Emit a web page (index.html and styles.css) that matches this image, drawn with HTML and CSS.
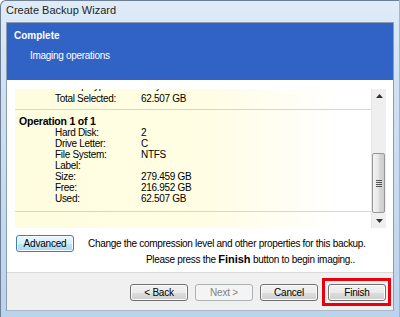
FILE: index.html
```html
<!DOCTYPE html>
<html lang="en">
  <head>
    <meta charset="UTF-8" />
    <title>Create Backup Wizard</title>
    <link rel="stylesheet" href="styles.css">
  </head>
  <body>
    <div class="window">
      <div class="titlebar">Create Backup Wizard</div>
      <div class="client">
        <div class="banner">
          <h2>Complete</h2>
          <p>Imaging operations</p>
        </div>
        <div class="main">
          <div class="listbox">
            <div class="list-content">
              <div class="section summary">
                <div class="row cut"><span class="key">Backup Type:</span><span>Fully</span></div>
                <div class="row"><span class="key">Total Selected:</span><span>62.507 GB</span></div>
              </div>
              <div class="section">
                <div class="op-title">Operation 1 of 1</div>
                <div class="row"><span class="key">Hard Disk:</span><span>2</span></div>
                <div class="row"><span class="key">Drive Letter:</span><span>C</span></div>
                <div class="row"><span class="key">File System:</span><span>NTFS</span></div>
                <div class="row"><span class="key">Label:</span><span></span></div>
                <div class="row"><span class="key">Size:</span><span>279.459 GB</span></div>
                <div class="row"><span class="key">Free:</span><span>216.952 GB</span></div>
                <div class="row"><span class="key">Used:</span><span>62.507 GB</span></div>
              </div>
            </div>
            <div class="scrollbar">
              <div class="arrow up">
                <svg width="7" height="4" viewBox="0 0 7 4"><path d="M3.5 0 L7 4 L0 4 Z" fill="#333"/></svg>
              </div>
              <div class="track">
                <div class="thumb">
                  <span class="grip"></span>
                </div>
              </div>
              <div class="arrow down">
                <svg width="7" height="4" viewBox="0 0 7 4"><path d="M0 0 L7 0 L3.5 4 Z" fill="#333"/></svg>
              </div>
            </div>
          </div>
          <div class="advanced-row">
            <button class="btn btn-focus">Advanced</button>
            <span>Change the compression level and other properties for this backup.</span>
          </div>
          <p class="hint">Please press the <b>Finish</b> button to begin imaging..</p>
        </div>
        <div class="footer">
          <button class="btn">&lt; Back</button>
          <button class="btn" disabled>Next &gt;</button>
          <button class="btn">Cancel</button>
          <button class="btn finish">Finish</button>
        </div>
      </div>
    </div>
  </body>
</html>
```

FILE: styles.css
```css
html, body {
  margin: 0;
  padding: 0;
}

body {
  width: 400px;
  height: 317px;
  overflow: hidden;
  font-family: "Liberation Sans", Arial, sans-serif;
  font-size: 10px;
  letter-spacing: -0.3px;
  color: #000;
  white-space: nowrap;
}

.window {
  width: 400px;
  height: 317px;
  box-sizing: border-box;
  background: linear-gradient(to bottom, #dfebf8 0%, #cfe0f3 30%, #bcd3ec 100%);
  border-top-left-radius: 6px;
  border-left: 1px solid #6c7f95;
  border-top: 1px solid #6c7f95;
  border-right: 1px solid #78c6e6;
  display: flex;
  flex-direction: column;
}

.titlebar {
  height: 21px;
  flex: none;
  padding: 3px 0 0 5px;
  box-sizing: border-box;
  font-size: 11px;
  letter-spacing: 0;
  color: #1e1e1e;
}

.client {
  margin: 0 5px;
  height: 289px;
  flex: none;
  box-sizing: border-box;
  border: 1px solid #8c9db2;
  border-bottom-color: #aab8c8;
  background: #fff;
  display: flex;
  flex-direction: column;
}

.banner {
  height: 57px;
  flex: none;
  box-sizing: border-box;
  background: #3163c6;
  color: #fff;
  padding: 6px 0 0 7px;
}

.banner h2 {
  margin: 0;
  font-size: 10px;
  font-weight: bold;
  line-height: 13px;
  letter-spacing: 0;
}

.banner p {
  margin: 7px 0 0 16px;
  line-height: 13px;
}

.main {
  flex: none;
  padding: 9px 7px 0 8px;
}

.listbox {
  height: 139px;
  display: flex;
  background: linear-gradient(to right, #fffde0 0%, #fffde3 50%, #ffffff 88%);
}

.list-content {
  flex: 1;
  overflow: hidden;
}

.section {
  border-bottom: 1px solid #d6d6d0;
}

.summary {
  padding: 4px 0 5px;
}

.section + .section {
  padding: 6px 0 7px 4px;
}

.row {
  display: flex;
  line-height: 11px;
  height: 11px;
  padding-left: 40px;
}

.section + .section .row {
  padding-left: 36px;
}

.row.cut {
  margin: -13px 0 2px;
}

.key {
  width: 86px;
  flex: none;
}

.op-title {
  font-weight: bold;
  line-height: 11px;
  font-size: 10.5px;
  letter-spacing: -0.2px;
}

.scrollbar {
  width: 14px;
  flex: none;
  display: flex;
  flex-direction: column;
  background: #efefef;
  border-left: 1px solid #e6e6e6;
}

.arrow {
  height: 14px;
  display: flex;
  align-items: center;
  justify-content: center;
  flex: none;
}

.track {
  flex: 1;
  display: flex;
  flex-direction: column;
  justify-content: flex-end;
}

.thumb {
  height: 60px;
  margin: 0 1px 1px 0;
  box-sizing: border-box;
  border: 1px solid #979797;
  border-radius: 2px;
  background: linear-gradient(to right, #f3f3f3 0%, #e6e6e6 50%, #d9d9d9 51%, #cdcdcd 100%);
  display: flex;
  align-items: center;
  justify-content: center;
}

.grip {
  width: 6px;
  height: 7px;
  background: repeating-linear-gradient(to bottom, #555 0, #555 1px, transparent 1px, transparent 2px);
}

.advanced-row {
  display: flex;
  align-items: center;
  margin-top: 7px;
  gap: 14px;
  padding-left: 1px;
}

.btn {
  font-family: inherit;
  font-size: 10px;
  letter-spacing: -0.2px;
  width: 58px;
  height: 17px;
  padding: 0;
  box-sizing: border-box;
  border: 1px solid #707070;
  border-radius: 3px;
  background: linear-gradient(to bottom, #f2f2f2 0%, #ebebeb 50%, #dddddd 51%, #cfcfcf 100%);
  box-shadow: inset 0 0 0 1px #fcfcfc;
  color: #000;
}

.btn-focus {
  border-color: #3c7fb1;
  background: linear-gradient(to bottom, #eaf6fd 0%, #d9f0fc 50%, #bee6fd 51%, #a7d9f5 100%);
}

.btn:disabled {
  border-color: #adb2b5;
  background: #f4f4f4;
  box-shadow: none;
  color: #838383;
}

.hint {
  margin: 1px 0 0 131px;
  line-height: 12px;
}

.hint b {
  font-size: 11px;
  letter-spacing: 0;
}

.footer {
  margin-top: 6px;
  flex: 1;
  border-top: 1px solid #dadada;
  background: #f0f0f0;
  display: flex;
  justify-content: flex-end;
  align-items: flex-start;
  padding: 11px 7px 0 0;
  gap: 7px;
}

.btn.finish {
  position: relative;
  margin-left: 3px;
}

.btn.finish::after {
  content: "";
  position: absolute;
  top: -7px;
  left: -7px;
  right: -6px;
  bottom: -6px;
  border: 3px solid #e8000e;
}
```
